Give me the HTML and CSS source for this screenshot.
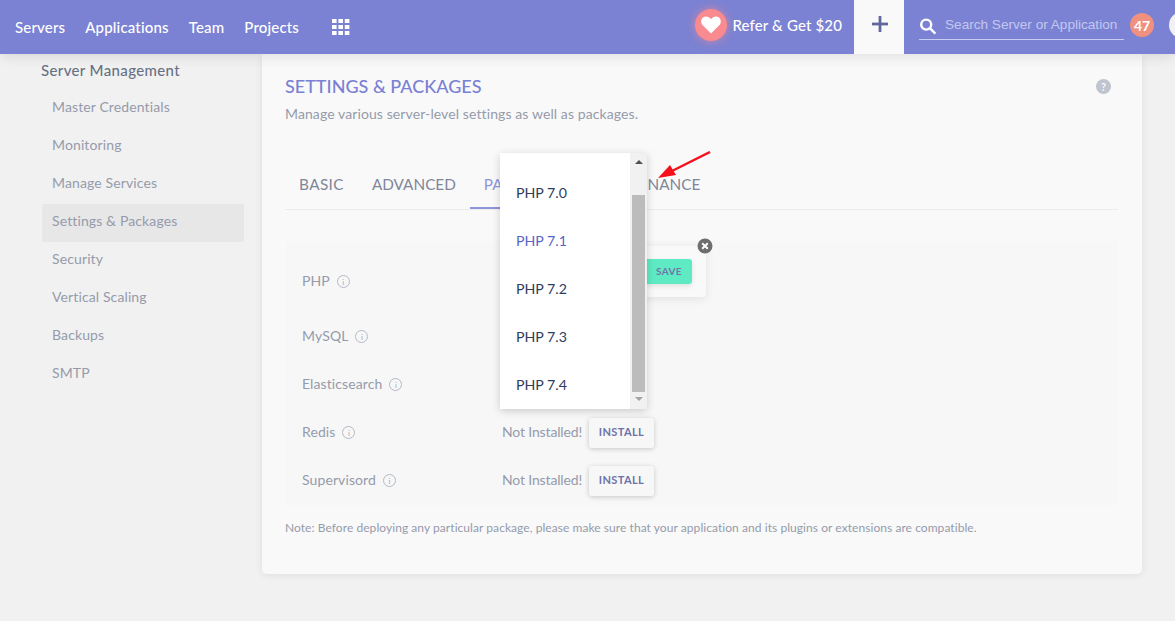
FILE: index.html
```html
<!DOCTYPE html>
<html lang="en">
<head>
<meta charset="utf-8">
<title>Settings &amp; Packages</title>
<link rel="stylesheet" href="styles.css">
</head>
<body>
<header class="topbar">
  <nav class="nav">
    <a class="nav-link">Servers</a>
    <a class="nav-link">Applications</a>
    <a class="nav-link">Team</a>
    <a class="nav-link">Projects</a>
  </nav>
  <svg class="grid-icon" width="18" height="18" viewBox="0 0 18 18" fill="#fff">
    <rect x="0" y="1" width="4.6" height="4"/><rect x="6.4" y="1" width="4.6" height="4"/><rect x="12.8" y="1" width="4.6" height="4"/>
    <rect x="0" y="7" width="4.6" height="4"/><rect x="6.4" y="7" width="4.6" height="4"/><rect x="12.8" y="7" width="4.6" height="4"/>
    <rect x="0" y="13" width="4.6" height="4"/><rect x="6.4" y="13" width="4.6" height="4"/><rect x="12.8" y="13" width="4.6" height="4"/>
  </svg>
  <div class="refer">
    <span class="heart">
      <svg width="20" height="18" viewBox="0 0 20 18" fill="#fff"><path d="M10 17.5 L2 9.6 C-0.6 7 -0.2 3.2 2 1.6 C4.4 -0.2 7.8 0.2 10 3.2 C12.2 0.2 15.6 -0.2 18 1.6 C20.2 3.2 20.6 7 18 9.6 Z"/></svg>
    </span>
    <span class="refer-text">Refer &amp; Get $20</span>
  </div>
  <button class="add-btn" type="button">
    <svg width="18" height="18" viewBox="-1 0 18 18" fill="#62689f"><rect x="7.6" y="1" width="2.8" height="16"/><rect x="1" y="7.6" width="16" height="2.8"/></svg>
  </button>
  <div class="search">
    <svg class="search-icon" width="18" height="18" viewBox="0 0 18 18" fill="none" stroke="#fff" stroke-width="2.4"><circle cx="7.2" cy="7.6" r="5"/><path d="M10.8 11.2 L16.4 16.6"/></svg>
    <span class="search-text">Search Server or Application</span>
  </div>
  <span class="badge">47</span>
  <span class="avatar"></span>
</header>

<div class="layout">
  <aside class="sidebar">
    <h2 class="side-title">Server Management</h2>
    <ul class="side-list">
      <li class="side-item">Master Credentials</li>
      <li class="side-item">Monitoring</li>
      <li class="side-item">Manage Services</li>
      <li class="side-item active">Settings &amp; Packages</li>
      <li class="side-item">Security</li>
      <li class="side-item">Vertical Scaling</li>
      <li class="side-item">Backups</li>
      <li class="side-item">SMTP</li>
    </ul>
  </aside>

  <main class="card">
    <div class="card-head">
      <div>
        <h1 class="card-title">SETTINGS &amp; PACKAGES</h1>
        <p class="card-sub">Manage various server-level settings as well as packages.</p>
      </div>
      <span class="help">?</span>
    </div>

    <div class="tabs">
      <span class="tab tab-first">BASIC</span>
      <span class="tab">ADVANCED</span>
      <span class="tab current">PACKAGES</span>
      <span class="tab">MAINTENANCE</span>
    </div>

    <section class="panel">
      <div class="row row-php">
        <span class="label">PHP <i class="info">i</i></span>
      </div>
      <div class="row">
        <span class="label">MySQL <i class="info">i</i></span>
      </div>
      <div class="row">
        <span class="label">Elasticsearch <i class="info">i</i></span>
      </div>
      <div class="row">
        <span class="label">Redis <i class="info">i</i></span>
        <span class="state">Not Installed!</span>
        <button class="install" type="button">INSTALL</button>
      </div>
      <div class="row">
        <span class="label">Supervisord <i class="info">i</i></span>
        <span class="state">Not Installed!</span>
        <button class="install" type="button">INSTALL</button>
      </div>
    </section>

    <p class="note">Note: Before deploying any particular package, please make sure that your application and its plugins or extensions are compatible.</p>

    <div class="popover">
      <button class="save" type="button">SAVE</button>
      <span class="close">
        <svg width="16" height="16" viewBox="0 0 16 16"><circle cx="8" cy="8" r="7.5" fill="#6e6e6e"/><path d="M5.2 5.2 L10.8 10.8 M10.8 5.2 L5.2 10.8" stroke="#fff" stroke-width="2"/></svg>
      </span>
    </div>

    <div class="dropdown">
      <ul class="options">
        <li class="option">PHP 7.0</li>
        <li class="option selected">PHP 7.1</li>
        <li class="option">PHP 7.2</li>
        <li class="option">PHP 7.3</li>
        <li class="option">PHP 7.4</li>
      </ul>
      <div class="scrollbar">
        <span class="arrow-up"></span>
        <span class="thumb"></span>
        <span class="arrow-down"></span>
      </div>
    </div>

    <svg class="annotation" width="54" height="30" viewBox="0 0 54 30">
      <path d="M52 1 L14 20" stroke="#f5101c" stroke-width="2.4" fill="none"/>
      <path d="M0 27 L12 14 L18 24 Z" fill="#f5101c"/>
    </svg>
  </main>
</div>
</body>
</html>
```

FILE: styles.css
```css
* { box-sizing: border-box; }

html, body {
  margin: 0;
  height: 621px;
  overflow: hidden;
}

body {
  background: #f1f1f1;
  font-family: "Lato", "Open Sans", sans-serif;
  color: #8a91a5;
}

ul { list-style: none; margin: 0; padding: 0; }
h1, h2, p { margin: 0; }
button { font-family: inherit; border: 0; cursor: pointer; }

.topbar {
  position: relative;
  z-index: 3;
  display: flex;
  align-items: center;
  height: 54px;
  padding-left: 15px;
  background: #7b82d3;
  box-shadow: 0 3px 12px rgba(0, 0, 0, .1);
  overflow: hidden;
}

.nav { display: flex; gap: 20px; }
.nav-link { color: #fff; font-size: 15px; line-height: 54px; font-weight: 500; letter-spacing: .17px; }

.grid-icon { margin-left: 33px; margin-top: -1px; }

.refer { display: flex; align-items: center; gap: 5px; margin-left: auto; margin-top: -4px; }
.heart {
  display: flex;
  align-items: center;
  justify-content: center;
  width: 32px;
  height: 32px;
  border-radius: 50%;
  background: #f98a90;
  box-shadow: 0 0 10px rgba(249, 138, 144, .7);
}
.refer-text { color: #fff; font-size: 15px; font-weight: 500; letter-spacing: .15px; }

.add-btn {
  display: flex;
  align-items: center;
  justify-content: center;
  width: 50px;
  height: 54px;
  margin-left: 12px;
  padding: 0 0 6px;
  background: #f9f9f9;
}

.search {
  display: flex;
  align-items: center;
  gap: 8px;
  width: 205px;
  height: 26px;
  margin: 0 6px 0 15px;
  padding-bottom: 1px;
  border-bottom: 1px solid #c9cdf0;
}
.search-icon { flex: none; }
.search-text {
  color: #c3c7f0;
  font-family: "Liberation Sans", Arial, sans-serif;
  font-size: 13.6px;
  line-height: 16px;
  margin-top: -3px;
  white-space: nowrap;
}

.badge {
  display: flex;
  align-items: center;
  justify-content: center;
  width: 24px;
  height: 24px;
  margin-top: -4px;
  border-radius: 50%;
  background: #f0907f;
  color: #fff;
  font-size: 14px;
  font-weight: 700;
  flex: none;
}
.avatar {
  flex: none;
  width: 26px;
  height: 26px;
  margin: -4px -20px 0 15px;
  border-radius: 50%;
  background: #f1f1f1;
}

.layout { display: flex; align-items: flex-start; height: 567px; }

.sidebar { flex: none; width: 262px; padding: 7px 18px 0 42px; }
.side-title {
  font-size: 15px;
  line-height: 18px;
  font-weight: 500;
  letter-spacing: .36px;
  color: #687184;
  margin-bottom: 11px;
  margin-left: -1px;
}
.side-item {
  height: 38px;
  line-height: 33px;
  padding-left: 10px;
  font-size: 14px;
  letter-spacing: .12px;
  color: #959bab;
  border-radius: 2px;
}
.side-item.active { background: #e7e7e7; }

.card {
  position: relative;
  flex: none;
  width: 880px;
  height: 520px;
  padding: 21px 24px 0 23px;
  background: #f9f9f9;
  border-radius: 0 0 5px 5px;
  box-shadow: 0 1px 8px rgba(0, 0, 0, .08);
}

.card-head { display: flex; justify-content: space-between; align-items: flex-start; }
.card-title { font-size: 18px; line-height: 22px; font-weight: 500; color: #7a80d4; }
.card-sub { margin-top: 7px; font-size: 14px; line-height: 20px; color: #959bab; letter-spacing: .1px; }
.help {
  display: flex;
  align-items: center;
  justify-content: center;
  width: 15px;
  height: 15px;
  margin: 4px 7px 0 0;
  border-radius: 50%;
  background: #c0c4ce;
  color: #f9f9f9;
  font-size: 11px;
  font-weight: 700;
}

.tabs {
  display: flex;
  height: 58px;
  margin-top: 28px;
  border-bottom: 1px solid #ececec;
}
.tab {
  height: 58px;
  padding: 6px 14px 0;
  line-height: 52px;
  font-size: 15.3px;
  color: #7f8699;
  white-space: nowrap;
}
.tab-first { letter-spacing: .4px; }
.tab.current { color: #8f95dc; border-bottom: 2px solid #8f95dc; height: 57px; }

.panel {
  margin-top: 31px;
  padding-top: 18px;
  height: 264px;
  background: #f7f7f7;
}

.row {
  display: flex;
  align-items: center;
  height: 48px;
  padding-left: 17px;
}
.row-php { height: 46px; margin-bottom: 8px; }

.label {
  display: flex;
  align-items: center;
  gap: 6px;
  width: 200px;
  font-size: 14px;
  color: #959bab;
  letter-spacing: .1px;
  margin-top: -3px;
}
.info {
  display: flex;
  align-items: center;
  justify-content: center;
  width: 13px;
  height: 13px;
  border: 1px solid #b4b9c6;
  border-radius: 50%;
  color: #a5aaba;
  font-size: 8px;
  font-style: normal;
  margin-top: 2px;
  margin-left: 1px;
}
.state { font-size: 14px; color: #959bab; letter-spacing: -.15px; width: 87px; margin-top: -3px; }
.install {
  width: 65px;
  height: 30px;
  padding: 0 0 3px;
  border-radius: 3px;
  background: #f7f7f7;
  color: #6d73a8;
  font-size: 11px;
  font-weight: 700;
  letter-spacing: .4px;
  box-shadow: 0 1px 5px rgba(0, 0, 0, .2);
}

.note { margin-top: 15px; font-size: 12px; line-height: 16px; color: #959bab; letter-spacing: .06px; }

.popover {
  position: absolute;
  left: 370px;
  top: 192px;
  display: flex;
  align-items: center;
  justify-content: flex-end;
  width: 74px;
  height: 51px;
  padding-right: 14px;
  background: #f9f9f9;
  border-radius: 3px;
  box-shadow: 0 2px 10px rgba(0, 0, 0, .09);
}
.save {
  width: 60px;
  height: 25px;
  padding: 0 0 2px 14px;
  border-radius: 3px;
  background: #5eebc4;
  color: #7275a8;
  font-size: 10px;
  font-weight: 700;
  letter-spacing: .4px;
  box-shadow: 0 2px 5px rgba(0, 0, 0, .1);
}
.close { position: absolute; top: -8px; right: -7px; width: 16px; height: 16px; }

.dropdown {
  position: absolute;
  left: 238px;
  top: 99px;
  display: flex;
  width: 147px;
  height: 256px;
  background: #fff;
  box-shadow: 0 2px 8px rgba(0, 0, 0, .18);
}
.options { flex: 1; padding-top: 16px; }
.option {
  height: 48px;
  line-height: 48px;
  padding-left: 16px;
  font-size: 14.2px;
  color: #2f3d5c;
}
.option.selected { color: #5866c8; }

.scrollbar {
  display: flex;
  flex-direction: column;
  align-items: center;
  flex: none;
  width: 17px;
  background: #f1f1f1;
}
.arrow-up {
  width: 0;
  height: 0;
  margin: 7px 0 31px;
  border: 4px solid transparent;
  border-top: 0;
  border-bottom: 4px solid #505050;
}
.thumb { width: 13px; height: 197px; background: #bcbcbc; }
.arrow-down {
  width: 0;
  height: 0;
  margin-top: 5px;
  border: 4px solid transparent;
  border-bottom: 0;
  border-top: 4px solid #a3a3a3;
}

.annotation { position: absolute; left: 396px; top: 97px; }
```
